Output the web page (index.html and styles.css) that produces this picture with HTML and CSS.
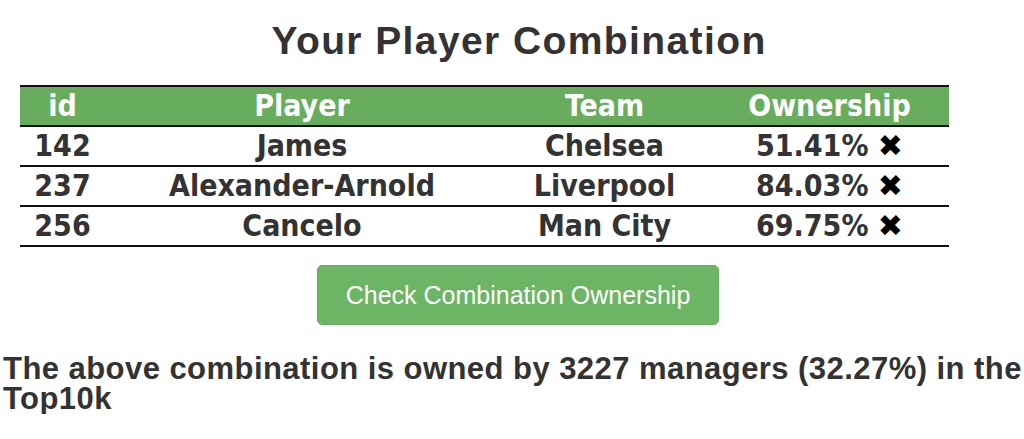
FILE: index.html
```html
<!DOCTYPE html>
<html lang="en">
<head>
<meta charset="utf-8">
<title>Your Player Combination</title>
<link rel="stylesheet" href="styles.css">
</head>
<body>
<main class="page">
  <h1 class="title">Your Player Combination</h1>
  <div class="table-wrap">
    <table class="combo">
      <colgroup>
        <col class="c-id"><col class="c-player"><col class="c-team"><col class="c-own">
      </colgroup>
      <thead>
        <tr><th>id</th><th>Player</th><th>Team</th><th>Ownership</th></tr>
      </thead>
      <tbody>
        <tr><td>142</td><td>James</td><td>Chelsea</td><td>51.41% <span class="x">✖</span></td></tr>
        <tr><td>237</td><td>Alexander-Arnold</td><td>Liverpool</td><td>84.03% <span class="x">✖</span></td></tr>
        <tr><td>256</td><td>Cancelo</td><td>Man City</td><td>69.75% <span class="x">✖</span></td></tr>
      </tbody>
    </table>
  </div>
  <div class="actions">
    <button class="btn" type="button">Check Combination Ownership</button>
  </div>
  <p class="result">The above combination is owned by 3227 managers (32.27%) in the Top10k</p>
</main>
</body>
</html>
```
FILE: styles.css
```css
html, body {
  margin: 0;
  padding: 0;
  background: #ffffff;
}

.page {
  width: 1024px;
  color: #333333;
  font-family: "Liberation Sans", Arial, sans-serif;
}

.title {
  margin: 19px 0 0 0;
  padding-left: 14px;
  text-align: center;
  font-size: 39px;
  line-height: 43px;
  font-weight: bold;
  letter-spacing: 1.4px;
  color: #333333;
}

.table-wrap {
  margin-top: 23px;
  padding-left: 20px;
}

.combo {
  width: 929px;
  border-collapse: collapse;
  table-layout: fixed;
  font-family: "DejaVu Sans Condensed", "DejaVu Sans", sans-serif;
  font-weight: bold;
  font-size: 30px;
}

.c-id { width: 85px; }
.c-player { width: 394px; }
.c-team { width: 211px; }
.c-own { width: 239px; }

.combo th,
.combo td {
  padding: 0;
  height: 38px;
  line-height: 38px;
  text-align: center;
  white-space: nowrap;
}

.combo th {
  background: #67ad5d;
  color: #ffffff;
  border-top: 2px solid #111111;
  border-bottom: 2px solid #111111;
}

.combo td {
  color: #333333;
  border-bottom: 2px solid #111111;
}

.x {
  color: #000000;
  font-family: "DejaVu Sans", sans-serif;
  font-size: 30px;
  line-height: 30px;
}

.actions {
  display: flex;
  justify-content: center;
  margin-top: 18px;
  padding-left: 12px;
}

.btn {
  width: 402px;
  height: 60px;
  background: #6cb564;
  border: 1px solid #66ad5e;
  border-radius: 5px;
  color: #ffffff;
  font-family: "Liberation Sans", Arial, sans-serif;
  font-size: 25px;
  font-weight: normal;
  padding: 0;
}

.result {
  margin: 29px 0 0 0;
  padding: 0 0 0 3px;
  font-size: 31px;
  line-height: 30px;
  font-weight: bold;
  letter-spacing: 0.45px;
  color: #333333;
}
```
